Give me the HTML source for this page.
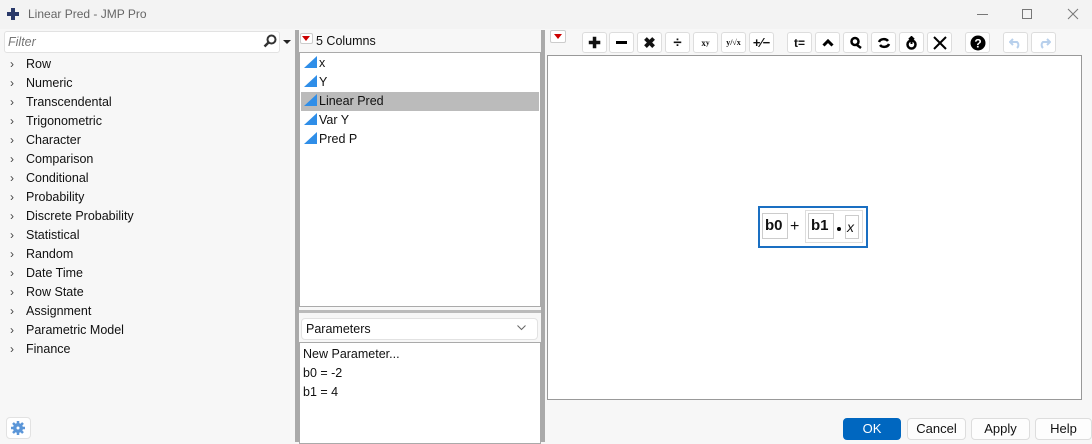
<!DOCTYPE html>
<html><head><style>
*{box-sizing:border-box;margin:0;padding:0}
body{width:1092px;height:442px;overflow:hidden;background:#f7f7f7;font-family:"Liberation Sans",sans-serif;font-size:12.5px;color:#111;position:relative}
.a{position:absolute}
.t{position:absolute;white-space:nowrap}
.tb{position:absolute;top:32px;width:25px;height:21px;background:#fff;border:1px solid #ddd;border-radius:3px;display:flex;align-items:center;justify-content:center;font-weight:bold;font-size:15px}
.btn{position:absolute;top:418px;height:22px;border:1px solid #ddd;border-radius:4px;background:#fdfdfd;text-align:center;line-height:20px;font-size:13px}
.tri{position:absolute;width:0;height:0;border-left:13px solid transparent;border-bottom:12px solid #2f8ee8}
.box{position:absolute;border:1px solid #ccc;background:#fff}
</style></head><body>
<div class="a" style="left:0;top:0;width:1092px;height:29px;background:#f3f3f3"></div>
<svg class="a" style="left:6px;top:7px" width="14" height="14"><path d="M5 1h4v4h4v4h-4v4h-4v-4h-4v-4h4z" fill="#2a3a6a"/></svg>
<div class="t" style="left:28px;top:7px;color:#666;font-size:12px">Linear Pred - JMP Pro</div>
<div class="a" style="left:977px;top:14px;width:11px;height:1px;background:#777"></div>
<div class="a" style="left:1022px;top:9px;width:10px;height:10px;border:1px solid #777"></div>
<svg class="a" style="left:1067px;top:8px" width="12" height="12"><path d="M1 1L11 11M11 1L1 11" stroke="#777"/></svg>

<div class="a" style="left:4px;top:31px;width:276px;height:22px;background:#fff;border:1px solid #e2e2e2;border-radius:3px"></div>
<div class="t" style="left:8px;top:35px;color:#777;font-style:italic">Filter</div>
<svg class="a" style="left:263px;top:34px" width="14" height="14"><circle cx="8.5" cy="5.5" r="4" stroke="#333" stroke-width="2" fill="none"/><path d="M5.5 8.5L1.5 12.5" stroke="#333" stroke-width="2.5"/></svg>
<div class="a" style="left:283px;top:40px;border-left:4px solid transparent;border-right:4px solid transparent;border-top:4px solid #222"></div>

<div style="position:absolute;left:0;top:55px;line-height:19px">
<div style="padding-left:26px;position:relative">Row<br>Numeric<br>Transcendental<br>Trigonometric<br>Character<br>Comparison<br>Conditional<br>Probability<br>Discrete Probability<br>Statistical<br>Random<br>Date Time<br>Row State<br>Assignment<br>Parametric Model<br>Finance</div></div>
<div style="position:absolute;left:10px;top:55px;line-height:19px;color:#444;font-size:12px">›<br>›<br>›<br>›<br>›<br>›<br>›<br>›<br>›<br>›<br>›<br>›<br>›<br>›<br>›<br>›</div>
<div class="a" style="left:6px;top:417px;width:25px;height:22px;background:#fff;border:1px solid #e2e2e2;border-radius:4px"></div>
<svg class="a" style="left:10px;top:420px" width="16" height="16"><circle cx="8" cy="8" r="5" fill="#5b96d8"/><path d="M8 1v14M1 8h14M3 3l10 10M13 3L3 13" stroke="#5b96d8" stroke-width="2.5"/><circle cx="8" cy="8" r="1.5" fill="#fff"/></svg>

<div class="a" style="left:295px;top:30px;width:4px;height:412px;background:#aaa"></div>
<div class="a" style="left:541px;top:30px;width:4px;height:412px;background:#aaa"></div>

<div class="a" style="left:300px;top:33px;width:13px;height:11px;background:#fff;border:1px solid #ccc;border-radius:2px"></div>
<div class="a" style="left:302px;top:36px;border-left:4px solid transparent;border-right:4px solid transparent;border-top:5px solid #c00"></div>
<div class="t" style="left:316px;top:34px">5 Columns</div>
<div class="box" style="left:299px;top:52px;width:242px;height:255px;border-color:#aaa"></div>
<div class="a" style="left:301px;top:92px;width:238px;height:19px;background:#bbb"></div>
<div class="tri" style="left:304px;top:56px"></div><div class="t" style="left:319px;top:56px">x</div>
<div class="tri" style="left:304px;top:75px"></div><div class="t" style="left:319px;top:75px">Y</div>
<div class="tri" style="left:304px;top:94px"></div><div class="t" style="left:319px;top:94px">Linear Pred</div>
<div class="tri" style="left:304px;top:113px"></div><div class="t" style="left:319px;top:113px">Var Y</div>
<div class="tri" style="left:304px;top:132px"></div><div class="t" style="left:319px;top:132px">Pred P</div>
<div class="a" style="left:299px;top:310px;width:242px;height:3px;background:#bbb"></div>
<div class="a" style="left:301px;top:318px;width:237px;height:22px;background:#fff;border:1px solid #e2e2e2;border-radius:4px"></div>
<div class="t" style="left:306px;top:322px">Parameters</div>
<svg class="a" style="left:517px;top:325px" width="9" height="6"><path d="M0.5 0.5L4.5 4.5L8.5 0.5" stroke="#666" fill="none"/></svg>
<div class="box" style="left:299px;top:342px;width:242px;height:102px;border-color:#aaa"></div>
<div style="position:absolute;left:303px;top:345px;line-height:19px">New Parameter...<br>b0 = -2<br>b1 = 4</div>

<div class="a" style="left:550px;top:30px;width:16px;height:13px;background:#fff;border:1px solid #ccc;border-radius:2px"></div>
<div class="a" style="left:554px;top:34px;border-left:4px solid transparent;border-right:4px solid transparent;border-top:5px solid #c00"></div>
<div class="tb" style="left:582px">✚</div>
<div class="tb" style="left:609px"><div style="width:11px;height:3px;background:#000"></div></div>
<div class="tb" style="left:637px">✖</div>
<div class="tb" style="left:665px">÷</div>
<div class="tb" style="left:693px;font-size:9px;font-family:'Liberation Serif'">x<sup>y</sup></div>
<div class="tb" style="left:721px;font-size:8px;font-family:'Liberation Serif'">y/√x</div>
<div class="tb" style="left:749px;font-size:13px">+⁄−</div>
<div class="tb" style="left:787px;font-size:12px">t=</div>
<div class="tb" style="left:815px"><svg width="12" height="8"><path d="M1.5 6.5L6 2L10.5 6.5" stroke="#000" stroke-width="3" fill="none"/></svg></div>
<div class="tb" style="left:843px"><svg width="14" height="13"><circle cx="6" cy="5.5" r="3.5" stroke="#000" stroke-width="2.5" fill="none"/><path d="M8 9l4 3" stroke="#000" stroke-width="2.5"/></svg></div>
<div class="tb" style="left:871px"><svg width="14" height="12"><path d="M2 5a5 4 0 0 1 9-1M12 7a5 4 0 0 1-9 1" stroke="#000" stroke-width="2.5" fill="none"/></svg></div>
<div class="tb" style="left:899px"><svg width="13" height="14"><circle cx="6.5" cy="8.5" r="4" stroke="#000" stroke-width="2.5" fill="none"/><path d="M6.5 1v7M4 3.5l2.5-2.5 2.5 2.5" stroke="#000" stroke-width="2" fill="none"/></svg></div>
<div class="tb" style="left:927px"><svg width="14" height="14"><path d="M1 1L13 13M13 1L1 13" stroke="#000" stroke-width="2"/></svg></div>
<div class="tb" style="left:965px"><svg width="16" height="16"><circle cx="8" cy="8" r="7.5" fill="#000"/><text x="8" y="12.5" font-size="12" font-weight="bold" fill="#fff" text-anchor="middle" font-family="Liberation Sans">?</text></svg></div>
<div class="tb" style="left:1003px"><svg width="14" height="12"><path d="M4 2L1 5l3 3M1 5h7a4 4 0 0 1 0 6" stroke="#b8d0ec" stroke-width="2" fill="none"/></svg></div>
<div class="tb" style="left:1031px"><svg width="14" height="12"><path d="M10 2l3 3-3 3M13 5h-7a4 4 0 0 0 0 6" stroke="#b8d0ec" stroke-width="2" fill="none"/></svg></div>

<div class="box" style="left:547px;top:55px;width:535px;height:345px;border-color:#999"></div>
<div class="a" style="left:758px;top:206px;width:110px;height:42px;border:2px solid #1a6fc2;background:#fff"></div>
<div class="a" style="left:762px;top:213px;width:26px;height:26px;border:1px solid #ccc"></div>
<div class="t" style="left:765px;top:217px;font-weight:bold;font-size:15px">b0</div>
<div class="t" style="left:790px;top:218px;font-size:16px">+</div>
<div class="a" style="left:805px;top:210px;width:58px;height:33px;border:1px solid #ddd"></div>
<div class="a" style="left:808px;top:213px;width:26px;height:26px;border:1px solid #ccc"></div>
<div class="t" style="left:811px;top:217px;font-weight:bold;font-size:15px">b1</div>
<div class="a" style="left:837px;top:227px;width:4px;height:4px;border-radius:2px;background:#000"></div>
<div class="a" style="left:845px;top:215px;width:14px;height:24px;border:1px solid #ccc"></div>
<div class="t" style="left:847px;top:219px;font-style:italic;font-size:14px">x</div>

<div class="btn" style="left:843px;width:58px;background:#0067c0;border-color:#0067c0;color:#fff">OK</div>
<div class="btn" style="left:907px;width:59px">Cancel</div>
<div class="btn" style="left:971px;width:59px">Apply</div>
<div class="btn" style="left:1035px;width:57px">Help</div>
</body></html>
